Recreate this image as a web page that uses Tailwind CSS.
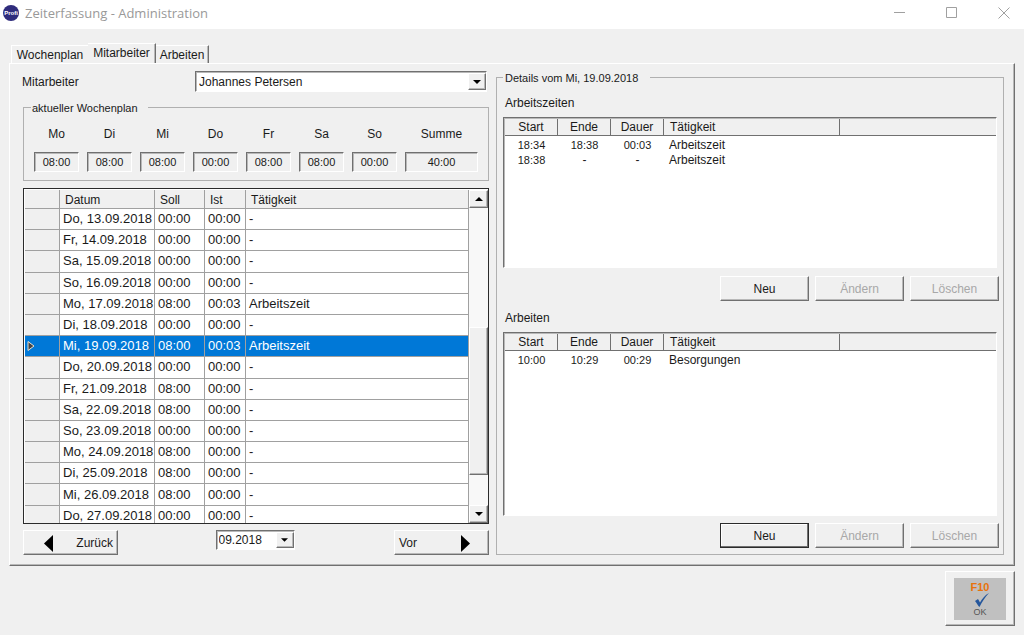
<!DOCTYPE html>
<html lang="de">
<head>
  <meta charset="UTF-8">
  <meta name="viewport" content="width=device-width, initial-scale=1.0">
  <title>Zeiterfassung - Administration</title>
  <script src="https://cdn.jsdelivr.net/npm/@tailwindcss/browser@4"></script>
</head>
<body class="min-h-screen bg-[#f0f0f0] text-[#1a1a1a] text-[12px] leading-4 font-['Liberation_Sans',Arial,sans-serif]">

  <!-- Title bar -->
  <header class="flex items-center h-[29px] bg-white pl-[3px]">
    <svg class="w-4 h-4 mb-1" viewBox="0 0 16 16">
      <circle cx="8" cy="8" r="8" fill="#2f2c7c"/>
      <text x="8" y="10" text-anchor="middle" font-family="Liberation Sans" font-weight="bold" font-size="6" fill="#fff">Profi</text>
    </svg>
    <h1 class="ml-[6px] mb-[3px] text-[13px] text-[#999] font-['Open_Sans',sans-serif]">Zeiterfassung - Administration</h1>
    <div class="ml-auto flex mb-1 pr-[14px] gap-10 text-[#a0a0a0]">
      <button aria-label="Minimieren"><svg class="w-3 h-3" viewBox="0 0 12 12" stroke="currentColor"><path d="M0 5.500h11"/></svg></button>
      <button aria-label="Maximieren"><svg class="w-3 h-3" viewBox="0 0 12 12" fill="none" stroke="currentColor"><path d="M.5 .5h10v10h-10z"/></svg></button>
      <button aria-label="Schließen"><svg class="w-3 h-3" viewBox="0 0 12 12" stroke="currentColor"><path d="M.5 .5l11 11M11.500 .5l-11 11"/></svg></button>
    </div>
  </header>

  <main class="px-[9px] pt-[14px]">
    <!-- Tabs -->
    <nav class="flex items-end pl-[2px]" role="tablist">
      <button role="tab" class="h-[18px] w-[77px] border-t border-l border-white">Wochenplan</button>
      <button role="tab" aria-selected="true" class="h-5 w-[68px] pb-[2px] border-t border-white border-r border-r-[#707070] shadow-[inset_-1px_0_0_#b8b8b8]">Mitarbeiter</button>
      <button role="tab" class="h-[18px] w-[53px] border-t border-white border-r border-r-[#707070] shadow-[inset_-1px_0_0_#b8b8b8]">Arbeiten</button>
    </nav>

    <section class="flex gap-[7px] pt-1 pb-[10px] pl-[13px] pr-[10px] border border-t-white border-l-white border-r-[#707070] border-b-[#707070] shadow-[inset_-1px_-1px_0_#b8b8b8]">

      <!-- Left column -->
      <div class="w-[466px] shrink-0 pt-[3px]">
        <div class="flex items-center justify-between pr-[2px]">
          <label for="employee" class="-ml-px">Mitarbeiter</label>
          <div class="relative w-[292px]">
            <select id="employee" class="block appearance-none w-full h-[21px] pl-[3px] bg-white border border-t-[#707070] border-l-[#707070] border-r-white border-b-white shadow-[inset_1px_1px_0_#b8b8b8]">
              <option>Johannes Petersen</option>
            </select>
            <span class="pointer-events-none absolute right-px top-[2px] w-[18px] h-[17px] flex items-center justify-center bg-[#f0f0f0] border border-t-white border-l-white border-r-[#707070] border-b-[#707070] shadow-[inset_-1px_-1px_0_#b8b8b8]">
              <svg class="w-2 h-1" viewBox="0 0 8 4"><path d="M0 0h8L4 4z"/></svg>
            </span>
          </div>
        </div>

        <fieldset class="mt-[6px] px-[10px] pt-[10px] pb-2 border border-[#b0b0b0]">
          <legend class="-ml-[3px] pt-[2px] pl-px pr-[10px] text-[11px]">aktueller Wochenplan</legend>
          <div class="flex gap-2 text-center">
            <div class="w-[45px]">Mo<div class="mt-[10px] h-5 text-[11px] leading-[18px] border border-t-[#707070] border-l-[#707070] border-r-white border-b-white shadow-[inset_1px_1px_0_#b8b8b8]">08:00</div></div>
            <div class="w-[45px]">Di<div class="mt-[10px] h-5 text-[11px] leading-[18px] border border-t-[#707070] border-l-[#707070] border-r-white border-b-white shadow-[inset_1px_1px_0_#b8b8b8]">08:00</div></div>
            <div class="w-[45px]">Mi<div class="mt-[10px] h-5 text-[11px] leading-[18px] border border-t-[#707070] border-l-[#707070] border-r-white border-b-white shadow-[inset_1px_1px_0_#b8b8b8]">08:00</div></div>
            <div class="w-[45px]">Do<div class="mt-[10px] h-5 text-[11px] leading-[18px] border border-t-[#707070] border-l-[#707070] border-r-white border-b-white shadow-[inset_1px_1px_0_#b8b8b8]">00:00</div></div>
            <div class="w-[45px]">Fr<div class="mt-[10px] h-5 text-[11px] leading-[18px] border border-t-[#707070] border-l-[#707070] border-r-white border-b-white shadow-[inset_1px_1px_0_#b8b8b8]">08:00</div></div>
            <div class="w-[45px]">Sa<div class="mt-[10px] h-5 text-[11px] leading-[18px] border border-t-[#707070] border-l-[#707070] border-r-white border-b-white shadow-[inset_1px_1px_0_#b8b8b8]">08:00</div></div>
            <div class="w-[45px]">So<div class="mt-[10px] h-5 text-[11px] leading-[18px] border border-t-[#707070] border-l-[#707070] border-r-white border-b-white shadow-[inset_1px_1px_0_#b8b8b8]">00:00</div></div>
            <div class="flex-1">Summe<div class="mt-[10px] h-5 text-[11px] leading-[18px] border border-t-[#707070] border-l-[#707070] border-r-white border-b-white shadow-[inset_1px_1px_0_#b8b8b8]">40:00</div></div>
          </div>
        </fieldset>

        <!-- Days -->
        <div class="mt-[7px] flex h-[336px] overflow-hidden bg-white border border-[#2b2b2b] pt-px pl-px">
          <div class="flex-1">
            <table class="w-full h-[337px] table-fixed border-separate border-spacing-0 text-left text-[13px] [&_td]:border-r [&_td]:border-b [&_td]:border-[#a0a0a0] [&_td]:pl-[3px] [&_td]:whitespace-nowrap [&_th]:border-r [&_th]:border-b [&_th]:border-[#a0a0a0] [&_th]:bg-[#f0f0f0]">
              <colgroup>
                <col class="w-[35px]"><col class="w-[95px]"><col class="w-[50px]"><col class="w-[41px]"><col>
              </colgroup>
              <thead>
                <tr class="h-[19px] text-[12px] [&>th]:font-normal [&>th]:pt-[2px] [&>th]:pl-[5px]"><th></th><th>Datum</th><th>Soll</th><th>Ist</th><th>Tätigkeit</th></tr>
              </thead>
              <tbody>
                <tr><th></th><td>Do, 13.09.2018</td><td>00:00</td><td>00:00</td><td>-</td></tr>
                <tr><th></th><td>Fr, 14.09.2018</td><td>00:00</td><td>00:00</td><td>-</td></tr>
                <tr><th></th><td>Sa, 15.09.2018</td><td>00:00</td><td>00:00</td><td>-</td></tr>
                <tr><th></th><td>So, 16.09.2018</td><td>00:00</td><td>00:00</td><td>-</td></tr>
                <tr><th></th><td>Mo, 17.09.2018</td><td>08:00</td><td>00:03</td><td>Arbeitszeit</td></tr>
                <tr><th></th><td>Di, 18.09.2018</td><td>00:00</td><td>00:00</td><td>-</td></tr>
                <tr class="bg-[#0078d7] text-white [&>th]:bg-[#0078d7]!"><th><svg class="ml-[2px] w-2 h-[10px]" viewBox="0 0 8 10"><path d="M1 .5v9L7 5z" fill="#444" stroke="#e8e0d0"/></svg></th><td>Mi, 19.09.2018</td><td>08:00</td><td>00:03</td><td>Arbeitszeit</td></tr>
                <tr><th></th><td>Do, 20.09.2018</td><td>00:00</td><td>00:00</td><td>-</td></tr>
                <tr><th></th><td>Fr, 21.09.2018</td><td>08:00</td><td>00:00</td><td>-</td></tr>
                <tr><th></th><td>Sa, 22.09.2018</td><td>08:00</td><td>00:00</td><td>-</td></tr>
                <tr><th></th><td>So, 23.09.2018</td><td>00:00</td><td>00:00</td><td>-</td></tr>
                <tr><th></th><td>Mo, 24.09.2018</td><td>08:00</td><td>00:00</td><td>-</td></tr>
                <tr><th></th><td>Di, 25.09.2018</td><td>08:00</td><td>00:00</td><td>-</td></tr>
                <tr><th></th><td>Mi, 26.09.2018</td><td>08:00</td><td>00:00</td><td>-</td></tr>
                <tr><th></th><td>Do, 27.09.2018</td><td>00:00</td><td>00:00</td><td>-</td></tr>
              </tbody>
            </table>
          </div>
          <!-- Scrollbar -->
          <div class="w-[19px] flex flex-col bg-[#f8f8f8]">
            <button aria-label="Nach oben" class="h-[18px] shrink-0 flex items-center justify-center bg-[#f0f0f0] border border-t-white border-l-white border-r-[#707070] border-b-[#707070] shadow-[inset_-1px_-1px_0_#b8b8b8]"><svg class="w-2 h-1" viewBox="0 0 8 4"><path d="M0 4h8L4 0z"/></svg></button>
            <div class="mt-[119px] h-[148px] bg-[#f0f0f0] border border-t-white border-l-white border-r-[#707070] border-b-[#707070] shadow-[inset_-1px_-1px_0_#b8b8b8]"></div>
            <button aria-label="Nach unten" class="mt-auto h-[18px] shrink-0 flex items-center justify-center bg-[#f0f0f0] border border-t-white border-l-white border-r-[#707070] border-b-[#707070] shadow-[inset_-1px_-1px_0_#b8b8b8]"><svg class="w-2 h-1" viewBox="0 0 8 4"><path d="M0 0h8L4 4z"/></svg></button>
          </div>
        </div>

        <div class="mt-[6px] flex items-start justify-between">
          <button class="w-[95px] h-[25px] pl-5 pr-1 flex items-center justify-between border border-t-white border-l-white border-r-[#707070] border-b-[#707070] shadow-[inset_-1px_-1px_0_#b8b8b8]">
            <svg class="w-[9px] h-[17px] mt-[2px]" viewBox="0 0 9 17"><path d="M9 0v17L0 8.500z"/></svg>
            Zurück
          </button>
          <div class="relative w-[79px] mr-[2px]">
            <select aria-label="Monat" class="block appearance-none w-full h-5 pl-[2px] text-[12px] bg-white border border-t-[#707070] border-l-[#707070] border-r-white border-b-white shadow-[inset_1px_1px_0_#b8b8b8]">
              <option>09.2018</option>
            </select>
            <span class="pointer-events-none absolute right-px top-[2px] w-[18px] h-4 flex items-center justify-center bg-[#f0f0f0] border border-t-white border-l-white border-r-[#707070] border-b-[#707070] shadow-[inset_-1px_-1px_0_#b8b8b8]">
              <svg class="w-[7px] h-1" viewBox="0 0 8 4"><path d="M0 0h8L4 4z"/></svg>
            </span>
          </div>
          <button class="w-[95px] h-[25px] pl-1 pr-[18px] flex items-center justify-between border border-t-white border-l-white border-r-[#707070] border-b-[#707070] shadow-[inset_-1px_-1px_0_#b8b8b8]">
            Vor
            <svg class="w-[9px] h-[17px] mt-[2px]" viewBox="0 0 9 17"><path d="M0 0v17l9-8.500z"/></svg>
          </button>
        </div>
      </div>

      <!-- Details -->
      <fieldset class="flex-1 min-w-0 pt-[9px] pb-1 pl-[6px] pr-1 border border-[#b0b0b0]">
        <legend class="pt-[2px] pl-[2px] pr-3 text-[11px]">Details vom Mi, 19.09.2018</legend>

        <h2 class="pl-[2px]">Arbeitszeiten</h2>
        <div class="mt-[6px] mr-[2px] h-[151px] bg-white border border-t-[#707070] border-l-[#707070] border-r-white border-b-white shadow-[inset_1px_1px_0_#b8b8b8] pt-px pl-px">
          <table class="w-full table-fixed border-separate border-spacing-0 text-center [&_th]:font-normal [&_th]:bg-[#f0f0f0] [&_th]:border-r [&_th]:border-b [&_th]:border-[#707070] [&_td]:leading-[15px]">
            <colgroup><col class="w-[53px]"><col class="w-[53px]"><col class="w-[53px]"><col class="w-[176px]"><col></colgroup>
            <thead>
              <tr class="h-[17px]"><th>Start</th><th>Ende</th><th>Dauer</th><th class="text-left pl-[6px]">Tätigkeit</th><th class="border-r-0!"></th></tr>
            </thead>
            <tbody>
              <tr><td class="text-[11px] pt-[2px]">18:34</td><td class="text-[11px] pt-[2px]">18:38</td><td class="text-[11px] pt-[2px]">00:03</td><td class="text-left pl-[5px] pt-[2px]">Arbeitszeit</td><td></td></tr>
              <tr><td class="text-[11px]">18:38</td><td>-</td><td>-</td><td class="text-left pl-[5px]">Arbeitszeit</td><td></td></tr>
            </tbody>
          </table>
        </div>
        <div class="mt-2 flex justify-end gap-[6px]">
          <button class="w-[89px] h-[25px] border border-t-white border-l-white border-r-[#707070] border-b-[#707070] shadow-[inset_-1px_-1px_0_#b8b8b8]">Neu</button>
          <button disabled class="w-[89px] h-[25px] text-[#a8a8a8] border border-t-white border-l-white border-r-[#707070] border-b-[#707070] shadow-[inset_-1px_-1px_0_#b8b8b8]">Ändern</button>
          <button disabled class="w-[89px] h-[25px] text-[#a8a8a8] border border-t-white border-l-white border-r-[#707070] border-b-[#707070] shadow-[inset_-1px_-1px_0_#b8b8b8]">Löschen</button>
        </div>

        <h2 class="mt-[9px] pl-[2px]">Arbeiten</h2>
        <div class="mt-[6px] mr-[2px] h-[184px] bg-white border border-t-[#707070] border-l-[#707070] border-r-white border-b-white shadow-[inset_1px_1px_0_#b8b8b8] pt-px pl-px">
          <table class="w-full table-fixed border-separate border-spacing-0 text-center [&_th]:font-normal [&_th]:bg-[#f0f0f0] [&_th]:border-r [&_th]:border-b [&_th]:border-[#707070] [&_td]:leading-[15px]">
            <colgroup><col class="w-[53px]"><col class="w-[53px]"><col class="w-[53px]"><col class="w-[176px]"><col></colgroup>
            <thead>
              <tr class="h-[17px]"><th>Start</th><th>Ende</th><th>Dauer</th><th class="text-left pl-[6px]">Tätigkeit</th><th class="border-r-0!"></th></tr>
            </thead>
            <tbody>
              <tr><td class="text-[11px] pt-[2px]">10:00</td><td class="text-[11px] pt-[2px]">10:29</td><td class="text-[11px] pt-[2px]">00:29</td><td class="text-left pl-[5px] pt-[2px]">Besorgungen</td><td></td></tr>
            </tbody>
          </table>
        </div>
        <div class="mt-[7px] flex justify-end gap-[6px]">
          <button class="w-[89px] h-[25px] border border-[#2b2b2b] shadow-[inset_-1px_-1px_0_#707070,inset_1px_1px_0_#fff]">Neu</button>
          <button disabled class="w-[89px] h-[25px] text-[#a8a8a8] border border-t-white border-l-white border-r-[#707070] border-b-[#707070] shadow-[inset_-1px_-1px_0_#b8b8b8]">Ändern</button>
          <button disabled class="w-[89px] h-[25px] text-[#a8a8a8] border border-t-white border-l-white border-r-[#707070] border-b-[#707070] shadow-[inset_-1px_-1px_0_#b8b8b8]">Löschen</button>
        </div>
      </fieldset>
    </section>

    <footer class="mt-[5px] flex justify-end">
      <button class="w-[70px] h-[55px] flex items-center justify-center border border-t-white border-l-white border-r-[#707070] border-b-[#707070] shadow-[inset_-1px_-1px_0_#b8b8b8]">
        <span class="w-[52px] h-[42px] pt-[3px] flex flex-col items-center bg-[#c0c0c0]">
          <span class="text-[11px] leading-3 font-bold text-[#e8720c]">F10</span>
          <svg class="w-[14px] h-[14px] ml-1" viewBox="0 0 14 14"><path d="M0 8l3-2 2 3.500C7 6 10 2 14 0 10 4 7 9 4.500 14 3 13 2 10 0 8z" fill="#24569c"/></svg>
          <span class="text-[9px] leading-[10px] text-[#555]">OK</span>
        </span>
      </button>
    </footer>
  </main>
</body>
</html>
